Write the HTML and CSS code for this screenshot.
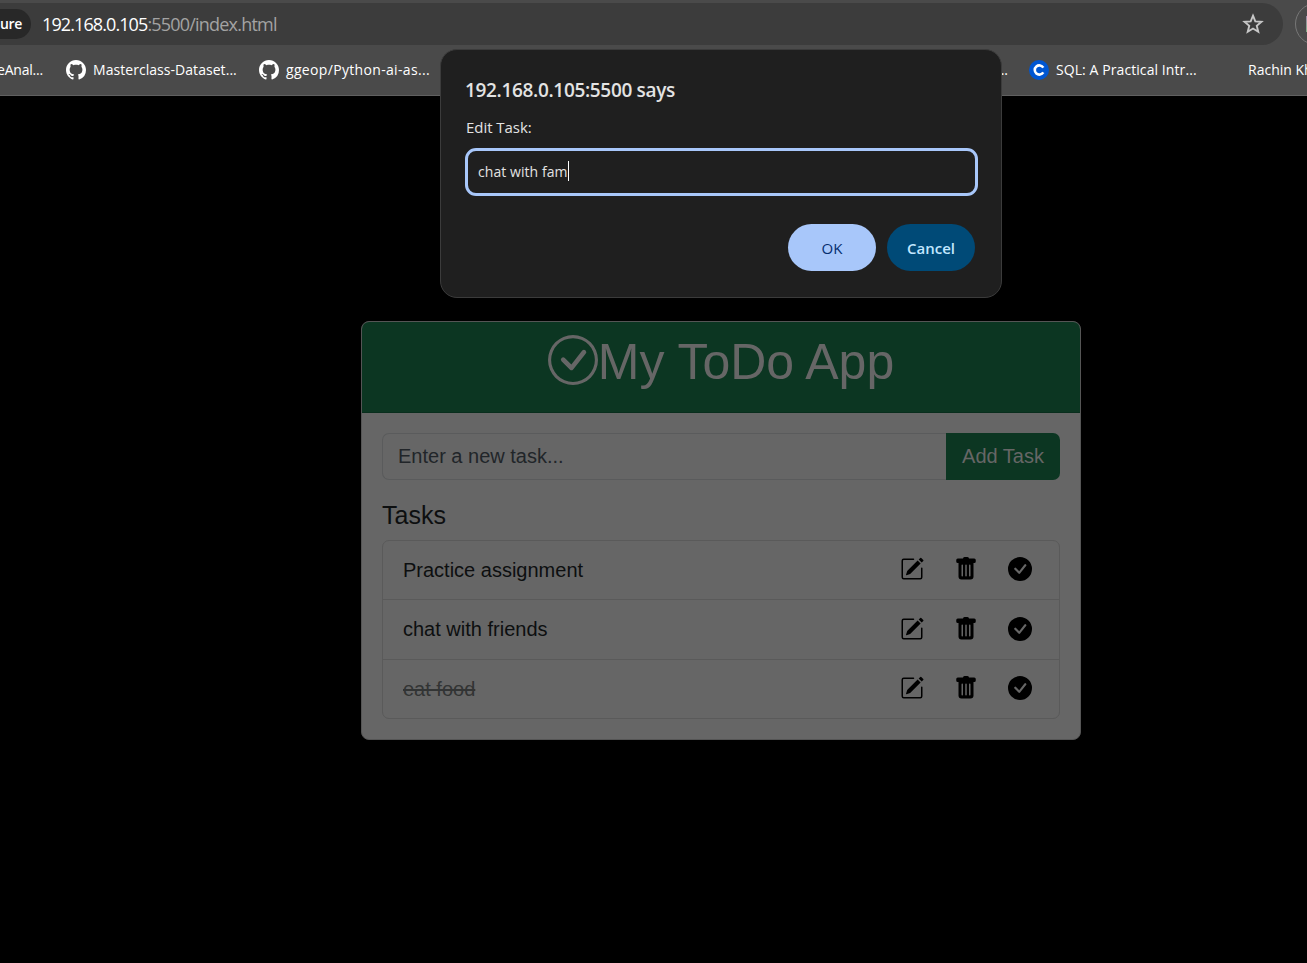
FILE: index.html
```html
<!DOCTYPE html>
<html lang="en">
<head>
<meta charset="utf-8">
<title>My ToDo App</title>
<link rel="stylesheet" href="styles.css">
</head>
<body>
<svg class="defs" width="0" height="0">
  <symbol id="github" viewBox="0 0 16 16"><path d="M8 0C3.58 0 0 3.58 0 8c0 3.54 2.29 6.53 5.47 7.59.4.07.55-.17.55-.38 0-.19-.01-.82-.01-1.49-2.01.37-2.53-.49-2.69-.94-.09-.23-.48-.94-.82-1.13-.28-.15-.68-.52-.01-.53.63-.01 1.08.58 1.23.82.72 1.21 1.87.87 2.33.66.07-.52.28-.87.51-1.07-1.78-.2-3.64-.89-3.64-3.95 0-.87.31-1.59.82-2.15-.08-.2-.36-1.02.08-2.12 0 0 .67-.21 2.2.82.64-.18 1.32-.27 2-.27s1.36.09 2 .27c1.53-1.04 2.2-.82 2.2-.82.44 1.1.16 1.92.08 2.12.51.56.82 1.27.82 2.15 0 3.07-1.87 3.75-3.65 3.95.29.25.54.73.54 1.48 0 1.07-.01 1.93-.01 2.2 0 .21.15.46.55.38A8.01 8.01 0 0 0 16 8c0-4.42-3.58-8-8-8"/></symbol>
  <symbol id="pencil" viewBox="0 0 16 16"><path d="M15.502 1.94a.5.5 0 0 1 0 .706L14.459 3.69l-2-2L13.502.646a.5.5 0 0 1 .707 0zm-1.75 2.456-2-2L4.939 9.21a.5.5 0 0 0-.121.196l-.805 2.414a.25.25 0 0 0 .316.316l2.414-.805a.5.5 0 0 0 .196-.12z"/><path fill-rule="evenodd" d="M1 13.5A1.5 1.5 0 0 0 2.5 15h11a1.5 1.5 0 0 0 1.5-1.5v-6a.5.5 0 0 0-1 0v6a.5.5 0 0 1-.5.5h-11a.5.5 0 0 1-.5-.5v-11a.5.5 0 0 1 .5-.5H9a.5.5 0 0 0 0-1H2.5A1.5 1.5 0 0 0 1 2.5z"/></symbol>
  <symbol id="trash" viewBox="0 0 16 16"><path d="M2.5 1a1 1 0 0 0-1 1v1a1 1 0 0 0 1 1H3v9a2 2 0 0 0 2 2h6a2 2 0 0 0 2-2V4h.5a1 1 0 0 0 1-1V2a1 1 0 0 0-1-1H10a1 1 0 0 0-1-1H7a1 1 0 0 0-1 1zm3 4a.5.5 0 0 1 .5.5v7a.5.5 0 0 1-1 0v-7a.5.5 0 0 1 .5-.5M8 5a.5.5 0 0 1 .5.5v7a.5.5 0 0 1-1 0v-7A.5.5 0 0 1 8 5m3 .5v7a.5.5 0 0 1-1 0v-7a.5.5 0 0 1 1 0"/></symbol>
  <symbol id="done" viewBox="0 0 16 16"><path d="M16 8A8 8 0 1 1 0 8a8 8 0 0 1 16 0m-3.97-3.03a.75.75 0 0 0-1.08.022L7.477 9.417 5.384 7.323a.75.75 0 0 0-1.06 1.06L6.97 11.03a.75.75 0 0 0 1.079-.02l3.992-4.99a.75.75 0 0 0-.01-1.05z"/></symbol>
</svg>

<header class="browser">
  <div class="toolbar">
    <div class="omnibox">
      <span class="chip">ure</span>
      <span class="url">192.168.0.105<span class="path">:5500/index.html</span></span>
      <svg class="star" viewBox="0 0 20 20"><path d="M10 2.400l2.100 5.200 5.600.4-4.300 3.600 1.400 5.500L10 14.100l-4.800 3 1.400-5.500L2.300 8l5.600-.4z"/></svg>
    </div>
    <div class="avatar"><i></i></div>
  </div>
  <nav class="bookmarks">
    <span class="mark m1">eAnal...</span>
    <svg class="gh"><use href="#github"/></svg><span class="mark m2">Masterclass-Dataset...</span>
    <svg class="gh"><use href="#github"/></svg><span class="mark m3">ggeop/Python-ai-as...</span>
    <span class="mark m4">...</span>
    <svg class="coursera" viewBox="0 0 20 20"><circle cx="10" cy="10" r="10"/><path d="M14.300 7.600A4.600 4.600 0 1 0 14.300 12.400"/></svg><span class="mark m5">SQL: A Practical Intr...</span>
    <span class="mark m6">Rachin Kh</span>
  </nav>
</header>

<main class="page">
  <section class="card">
    <h1 class="card-header"><svg class="logo" viewBox="0 0 16 16"><path d="M8 15A7 7 0 1 1 8 1a7 7 0 0 1 0 14m0 1A8 8 0 1 0 8 0a8 8 0 0 0 0 16"/><path d="m10.97 4.97-.02.022-3.473 4.425-2.093-2.094a.75.75 0 0 0-1.06 1.06L6.97 11.03a.75.75 0 0 0 1.079-.02l3.992-4.99a.75.75 0 0 0-1.071-1.05"/></svg><span>My ToDo App</span></h1>
    <div class="card-body">
      <div class="entry"><div class="new-task">Enter a new task...</div><div class="add">Add Task</div></div>
      <h2>Tasks</h2>
      <ul class="list">
        <li><span>Practice assignment</span><div class="actions"><svg><use href="#pencil"/></svg><svg><use href="#trash"/></svg><svg><use href="#done"/></svg></div></li>
        <li><span>chat with friends</span><div class="actions"><svg><use href="#pencil"/></svg><svg><use href="#trash"/></svg><svg><use href="#done"/></svg></div></li>
        <li><span class="completed">eat food</span><div class="actions"><svg><use href="#pencil"/></svg><svg><use href="#trash"/></svg><svg><use href="#done"/></svg></div></li>
      </ul>
    </div>
  </section>
</main>

<div class="dialog">
  <div class="title">192.168.0.105:5500 says</div>
  <div class="label">Edit Task:</div>
  <div class="field"><span>chat with fam</span><i class="caret"></i></div>
  <div class="buttons"><div class="ok">OK</div><div class="cancel">Cancel</div></div>
</div>
</body>
</html>
```
FILE: styles.css
```css
* { box-sizing: border-box; }
body { margin: 0; height: 963px; overflow: hidden; background: #000; font-family: "Open Sans", "Noto Sans", sans-serif; }
.defs { position: absolute; }
.browser { height: 96px; background: #4a4a4a; border-bottom: 1px solid #606060; color: #fff; overflow: hidden; }
.toolbar { display: flex; height: 45px; padding-top: 3px; }
.omnibox { display: flex; align-items: center; width: 1283px; height: 42px; background: #3c3c3c; border-radius: 0 21px 21px 0; flex: none; }
.chip { display: flex; align-items: center; width: 31px; height: 30px; padding-bottom: 2px; margin-left: 0; border-radius: 0 15px 15px 0; background: #282828; font-size: 14px; font-weight: 600; letter-spacing: -.4px; }
.url { margin-left: 11px; font-size: 18px; letter-spacing: -.9px; white-space: nowrap; }
.path { color: #a3a3a3; letter-spacing: -.8px; }
.star { width: 22px; height: 22px; margin-left: auto; margin-right: 19px; fill: none; stroke: #c7c7c7; stroke-width: 1.7; }
.avatar { flex: none; display: flex; align-items: center; width: 42px; height: 42px; margin-left: 12px; padding-left: 10px; border: 1px solid #777; border-radius: 50%; }
.avatar i { width: 20px; height: 16px; background: linear-gradient(#a08aa8, #7fae86); }
.bookmarks { display: flex; align-items: center; height: 50px; font-size: 14px; white-space: nowrap; }
.mark { flex: none; padding-bottom: 2px; }
.m1 { width: 69px; margin-left: -3px; letter-spacing: -.2px; }
.m2 { width: 165px; margin-left: -1px; margin-right: 1px; letter-spacing: .05px; }
.m3 { width: 153px; margin-left: -1px; letter-spacing: .33px; }
.m4 { width: 32px; margin-left: 558px; }
.m5 { width: 192px; margin-left: -1px; margin-right: 1px; letter-spacing: .08px; }
.m6 { margin-left: -1px; }
.gh, .coursera { flex: none; width: 20px; height: 20px; margin-right: 8px; fill: #fff; }
.coursera circle { fill: #0056d2; }
.coursera path { fill: none; stroke: #fff; stroke-width: 2.600; }
.page { padding: 225px 0 0 361px; font-family: "Liberation Sans", Arial, sans-serif; font-size: 20px; line-height: 30px; color: #0d0f10; }
.card { width: 720px; height: 419px; background: #666; border: 1px solid #555; border-radius: 8px; overflow: hidden; }
.card-header { display: flex; justify-content: center; height: 91px; margin: 0; padding-top: 10px; background: #0c3622; border-bottom: 1px solid #092e1d; color: #666; font-size: 50px; font-weight: 400; line-height: 60px; }
.logo { width: 50px; height: 50px; margin-top: 3px; fill: #666; }
.card-body { padding: 20px; }
.entry { display: flex; height: 47px; }
.new-task { flex: 1; padding: 7px 15px; border: 1px solid #5a5b5c; border-right: 0; border-radius: 7px 0 0 7px; color: #212529; }
.add { width: 114px; padding-top: 8px; border-radius: 0 7px 7px 0; background: #0c3622; color: #666; text-align: center; }
h2 { margin: 20px 0 9px; font-size: 25px; font-weight: 400; line-height: 31px; }
.list { margin: 0; padding: 0; list-style: none; border: 1px solid #5a5a5a; border-radius: 7px; }
li { display: flex; align-items: center; justify-content: space-between; height: 58px; padding: 0 27.500px 0 20px; }
li + li { height: 60px; border-top: 1px solid #5a5a5a; }
li:last-child { height: 59px; }
li > span { margin-top: -1px; }
.completed { color: #323434; text-decoration: line-through; }
.actions { display: flex; gap: 30px; }
.actions svg { width: 24px; height: 24px; fill: #000; margin-top: -2px; }
.dialog { position: absolute; top: 49px; left: 440px; width: 562px; height: 249px; padding: 24px 25px; background: #1f1f1f; border: 1px solid #3b3b3b; border-radius: 17px; color: #e3e3e3; }
.title { margin-left: -1px; font-size: 19px; font-weight: 600; line-height: 32px; letter-spacing: -.33px; }
.label { margin-top: 8px; font-size: 15px; line-height: 26px; letter-spacing: -.05px; }
.field { display: flex; align-items: center; width: 513px; height: 48px; margin: 8px 0 0 -1px; padding: 0 0 2px 10px; border: 3px solid #a8c7fa; border-radius: 11px; font-size: 14px; letter-spacing: .06px; }
.caret { width: 1px; height: 20px; background: #fff; }
.buttons { display: flex; justify-content: flex-end; gap: 11px; margin: 28px 1px 0 0; font-size: 15px; font-weight: 600; line-height: 48px; text-align: center; }
.ok, .cancel { width: 88px; height: 47px; border-radius: 24px; }
.ok { background: #a8c7fa; color: #062e6f; font-weight: 500; }
.cancel { background: #004a77; color: #c2e7ff; }
```
